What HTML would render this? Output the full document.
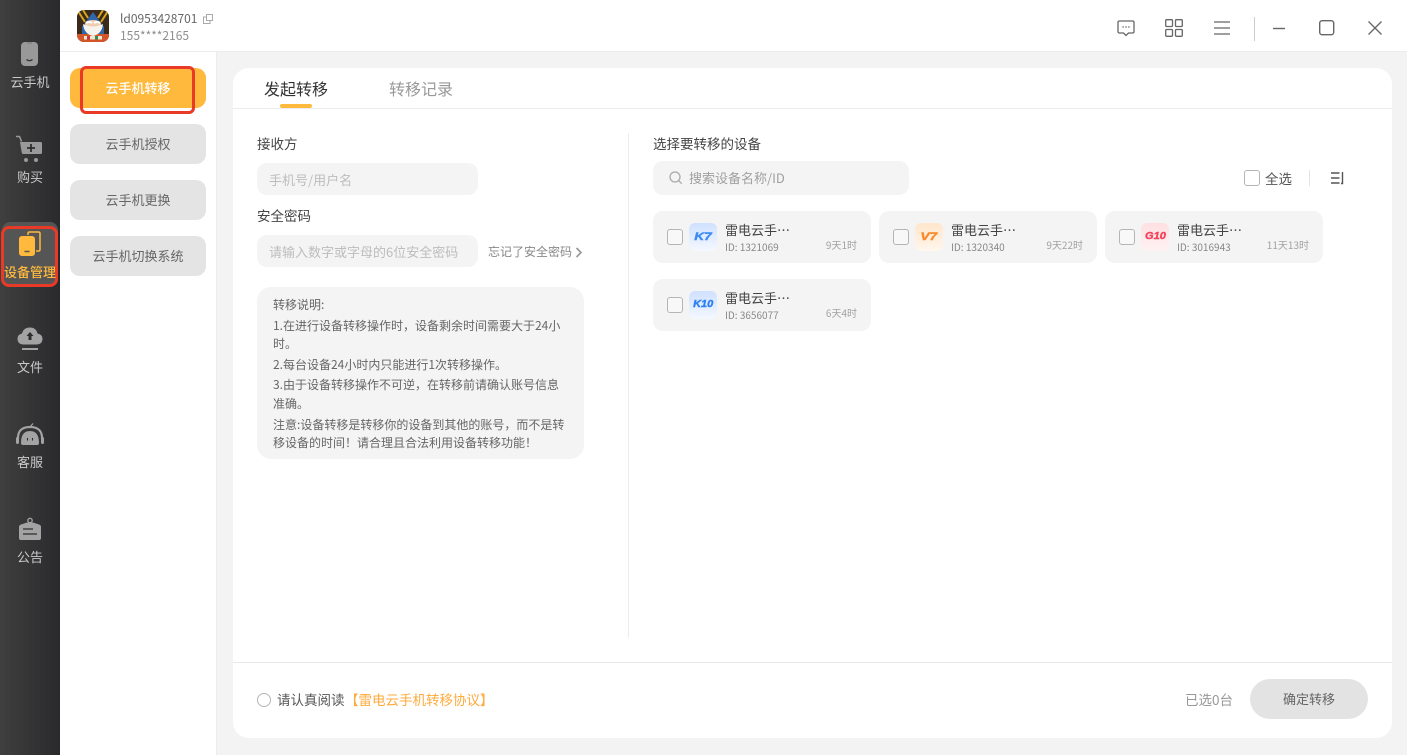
<!DOCTYPE html>
<html lang="zh-CN"><head><meta charset="utf-8"><title>设备管理</title>
<style>
*{box-sizing:border-box;margin:0;padding:0}
html,body{width:1407px;height:755px;overflow:hidden;background:#f3f3f3}
body{position:relative;font-family:"Noto Sans CJK SC","Liberation Sans",sans-serif;color:#333}
.a{position:absolute;white-space:nowrap}
.t{position:absolute;white-space:nowrap;line-height:20px}
svg{position:absolute;display:block}
.rail{left:0;top:0;width:60px;height:755px;background:linear-gradient(90deg,#3f3f3f,#2a2a2d)}
.nl{left:0;width:60px;text-align:center;font-size:13px;color:#c9c9c9}
.side{left:60px;top:52px;width:157px;height:703px;background:#fff;border-right:1px solid #ececec}
.top{left:60px;top:0;width:1347px;height:52px;background:#fff;border-bottom:1px solid #ececec}
.btn{left:70px;width:136px;height:40px;border-radius:10px;background:#e4e4e4;color:#666;font-size:13px;text-align:center;line-height:40px}
.main{left:233px;top:68px;width:1159px;height:670px;background:#fff;border-radius:16px}
.inp{background:#f4f4f4;border-radius:10px;font-size:13px;color:#bdbdbd;line-height:34px;height:32px;width:221px;left:257px;padding-left:12px}
.card{width:218px;height:52px;background:#f4f4f4;border-radius:10px}
.cb{position:absolute;left:14px;top:18px;width:16px;height:16px;border:1.5px solid #b5b5b5;border-radius:3px;background:#f8f8f8}
.ic{position:absolute;left:36px;top:12px;width:28px;height:28px;border-radius:6px;font:italic bold 11px/28px "Liberation Sans",sans-serif;text-align:center;-webkit-text-stroke:.4px currentColor}
.ic span{display:inline-block;transform:scaleX(1.25)}
.ic.w span{transform:scaleX(1.1)}
.n{position:absolute;left:72px;top:10px;font-size:13px;line-height:18px;color:#444;white-space:nowrap}
.id{position:absolute;left:72px;top:28px;font-size:10px;line-height:16px;color:#888;white-space:nowrap}
.d{position:absolute;right:14px;top:26px;font-size:10px;line-height:16px;color:#a2a2a2;white-space:nowrap}
.note{left:257px;top:287px;width:327px;height:172px;background:#f4f4f4;border-radius:14px}
.note div{position:absolute;left:16px;font-size:12px;line-height:18px;color:#666;white-space:nowrap}
</style></head><body>

<div class="a rail"></div>
<div class="a" style="left:2px;top:222px;width:56px;height:64px;background:#555;border-radius:8px"></div>
<div class="a" style="left:1px;top:226px;width:57px;height:61px;border:3px solid #e83a26;border-radius:8px"></div>

<svg style="left:21px;top:42px" width="18" height="24" viewBox="0 0 18 24"><rect width="17" height="24" rx="4" fill="#999"/><path d="M5.500 17.500q3 2.500 6 0" stroke="#333" stroke-width="1.300" fill="none"/><path d="M6 1h5" stroke="#777" stroke-width="1"/></svg>
<div class="t nl" style="top:72px">云手机</div>

<svg style="left:15px;top:135px" width="30" height="28" viewBox="0 0 30 28"><path d="M1 1.500h3.500l2 5" stroke="#999" stroke-width="1.500" fill="none"/><path d="M5 7h20.500q1.500 0 1.500 1.500v9q0 1.500-1.500 1.500h-17q-1.500 0-1.800-1.500z" fill="#999"/><circle cx="11" cy="25" r="2" fill="#999"/><circle cx="21" cy="25" r="2" fill="#999"/><path d="M12 13h8M16 9v8" stroke="#2d2d2f" stroke-width="1.800"/></svg>
<div class="t nl" style="top:167px">购买</div>

<svg style="left:18px;top:231px" width="24" height="26" viewBox="0 0 24 26"><path d="M10 4V2.500q0-1.500 1.500-1.500h9q1.500 0 1.500 1.500v16q0 1.500-1.500 1.500H18" stroke="#ffb93d" stroke-width="1.500" fill="none"/><rect x="1" y="5" width="16" height="20" rx="3" fill="#ffb93d"/><path d="M6.500 20.500h5" stroke="#555" stroke-width="1.500"/></svg>
<div class="t nl" style="top:262px;color:#ffb93d;font-weight:500">设备管理</div>

<svg style="left:17px;top:326px" width="26" height="25" viewBox="0 0 26 25"><path d="M6 18.500q-5.500-.5-5.500-5.500 0-4.500 4.500-5.500 1.500-6 8-6 6 0 7.500 6 5 1 5 5.500 0 5-5.500 5.500z" fill="#a3a3a3"/><path d="M13 6l3.500 4h-2v4h-3v-4h-2z" fill="#2d2d2f"/><path d="M5 23h16" stroke="#a3a3a3" stroke-width="2"/></svg>
<div class="t nl" style="top:357px">文件</div>

<svg style="left:15px;top:422px" width="30" height="26" viewBox="0 0 30 26"><path d="M3 17Q2.500 5 15 5q12.500 0 12 12" stroke="#a3a3a3" stroke-width="2.200" fill="none"/><path d="M15 5l3-3.500" stroke="#a3a3a3" stroke-width="1.300"/><path d="M6 21q0-12 9-12t9 12q0 2-2 2H8q-2 0-2-2z" fill="#a3a3a3"/><path d="M12.500 16v2.500M17.500 16v2.500" stroke="#2d2d2f" stroke-width="1.100"/><rect x="1" y="15" width="3" height="7" rx="1.500" fill="#a3a3a3"/><rect x="26" y="15" width="3" height="7" rx="1.500" fill="#a3a3a3"/></svg>
<div class="t nl" style="top:452px">客服</div>

<svg style="left:18px;top:517px" width="24" height="24" viewBox="0 0 24 24"><circle cx="12" cy="3.500" r="2.200" fill="none" stroke="#a3a3a3" stroke-width="1.300"/><path d="M9 5.500L3 7.500Q1 8 1 10v11q0 2 2 2h18q2 0 2-2V10q0-2-2-2.500l-6-2z" fill="#a3a3a3"/><path d="M5 12h10M5 17h14" stroke="#2d2d2f" stroke-width="1.300"/></svg>
<div class="t nl" style="top:547px">公告</div>

<div class="a top"></div>
<svg style="left:77px;top:10px" width="32" height="32" viewBox="0 0 32 32">
<defs><clipPath id="c"><rect width="32" height="32" rx="7"/></clipPath></defs>
<g clip-path="url(#c)"><rect width="32" height="32" fill="#3a2a1c"/><path d="M1 1l7 11M31 1l-7 11M6 0l5 8M26 0l-5 8" stroke="#d9a41e" stroke-width="2"/><path d="M16 2L5 17v8h22v-8z" fill="#2f66ad"/><rect x="0" y="24" width="32" height="8" fill="#d2562a"/><ellipse cx="16" cy="14" rx="8" ry="4" fill="#f0cdb0"/><path d="M6 14q10 5 20 0-1 10-10 12-9-2-10-12z" fill="#f6f2ec"/><path d="M9 13q3-2 6 0M17 13q3-2 6 0" stroke="#fff" stroke-width="2" fill="none"/><rect x="7" y="26" width="18" height="3.500" fill="#ece6d6"/><rect x="10" y="26" width="3" height="3.500" fill="#c33"/><rect x="18" y="26" width="3" height="3.500" fill="#3a8a4a"/></g></svg>
<div class="t" style="left:120px;top:9px;font-size:12px;color:#666">ld0953428701</div>
<svg style="left:203px;top:14px" width="10" height="10" viewBox="0 0 10 10" fill="none" stroke="#aaa"><rect x="3.500" y=".5" width="6" height="6"/><path d="M3 3H.5v6.500H7V7"/></svg>
<div class="t" style="left:120px;top:26px;font-size:12px;color:#8e8e8e">155****2165</div>

<svg style="left:1117px;top:20px" width="18" height="17" viewBox="0 0 18 17" fill="none" stroke="#666" stroke-width="1.300"><path d="M2.500 1h13q1.500 0 1.500 1.500v9q0 1.500-1.500 1.500H11.500L9 15.500 6.500 13h-4Q1 13 1 11.500v-9Q1 1 2.500 1z"/><path d="M5.500 7h1.200M8.400 7h1.200M11.300 7h1.200" stroke-width="1.500"/></svg>
<svg style="left:1165px;top:19px" width="18" height="18" viewBox="0 0 18 18" fill="none" stroke="#666" stroke-width="1.300"><rect x=".7" y=".7" width="6.800" height="6.800" rx="1"/><rect x="10.500" y=".7" width="6.800" height="6.800" rx="1"/><rect x=".7" y="10.500" width="6.800" height="6.800" rx="1"/><rect x="10.500" y="10.500" width="6.800" height="6.800" rx="1"/></svg>
<svg style="left:1214px;top:21px" width="16" height="14" viewBox="0 0 16 14" stroke="#666" stroke-width="1.300"><path d="M0 1h16M0 7h16M0 13h16"/></svg>
<div class="a" style="left:1254px;top:17px;width:1px;height:24px;background:#ccc"></div>
<svg style="left:1273px;top:27px" width="12" height="3" viewBox="0 0 12 3" stroke="#666" stroke-width="1.400"><path d="M0 1.500h12"/></svg>
<svg style="left:1319px;top:20px" width="16" height="16" viewBox="0 0 16 16" fill="none" stroke="#666" stroke-width="1.400"><rect x=".7" y=".7" width="14" height="14" rx="2.500"/></svg>
<svg style="left:1368px;top:21px" width="14" height="14" viewBox="0 0 14 14" stroke="#666" stroke-width="1.300"><path d="M.5.500l13 13M13.500.500l-13 13"/></svg>

<div class="a side"></div>
<div class="a btn" style="top:68px;background:#ffb93d;color:#fff;font-weight:500">云手机转移</div>
<div class="a" style="left:80px;top:66px;width:115px;height:48px;border:3px solid #e83a26;border-radius:6px"></div>
<div class="a btn" style="top:124px">云手机授权</div>
<div class="a btn" style="top:180px">云手机更换</div>
<div class="a btn" style="top:236px">云手机切换系统</div>

<div class="a main"></div>
<div class="t" style="left:264px;top:78px;font-size:16px;color:#333">发起转移</div>
<div class="t" style="left:389px;top:78px;font-size:16px;color:#999">转移记录</div>
<div class="a" style="left:280px;top:104px;width:32px;height:4px;border-radius:2px;background:#ffb93d"></div>
<div class="a" style="left:233px;top:108px;width:1159px;height:1px;background:#ececec"></div>

<div class="t" style="left:257px;top:133px;font-size:13.500px;color:#444">接收方</div>
<div class="a inp" style="top:163px">手机号/用户名</div>
<div class="t" style="left:257px;top:205px;font-size:13.500px;color:#444">安全密码</div>
<div class="a inp" style="top:235px">请输入数字或字母的6位安全密码</div>
<div class="t" style="left:488px;top:242px;font-size:12px;color:#888">忘记了安全密码</div>
<svg style="left:575px;top:247px" width="8" height="11" viewBox="0 0 8 11" fill="none" stroke="#999" stroke-width="1.700"><path d="M1.500 1l4.500 4.500L1.500 10"/></svg>

<div class="a note">
<div style="top:9px">转移说明:</div>
<div style="top:30px">1.在进行设备转移操作时，设备剩余时间需要大于24小</div>
<div style="top:48px">时。</div>
<div style="top:69px">2.每台设备24小时内只能进行1次转移操作。</div>
<div style="top:89px">3.由于设备转移操作不可逆，在转移前请确认账号信息</div>
<div style="top:108px">准确。</div>
<div style="top:129px">注意:设备转移是转移你的设备到其他的账号，而不是转</div>
<div style="top:147px">移设备的时间！请合理且合法利用设备转移功能！</div>
</div>

<div class="a" style="left:628px;top:133px;width:1px;height:505px;background:#ececec"></div>
<div class="t" style="left:653px;top:133px;font-size:13.500px;color:#444">选择要转移的设备</div>
<div class="a" style="left:653px;top:161px;width:256px;height:34px;border-radius:10px;background:#f4f4f4"></div>
<svg style="left:669px;top:171px" width="14" height="14" viewBox="0 0 14 14" fill="none" stroke="#aaa" stroke-width="1.300"><circle cx="6" cy="6" r="5"/><path d="M9.700 9.700l3 3"/></svg>
<div class="t" style="left:689px;top:168px;font-size:13px;color:#a0a0a0">搜索设备名称/ID</div>

<div class="a" style="left:1244px;top:170px;width:16px;height:16px;border:1.500px solid #b5b5b5;border-radius:3px;background:#fff"></div>
<div class="t" style="left:1265px;top:168px;font-size:13.500px;color:#555">全选</div>
<div class="a" style="left:1309px;top:170px;width:1px;height:16px;background:#e4e4e4"></div>
<svg style="left:1331px;top:172px" width="14" height="13" viewBox="0 0 14 13" stroke="#555" stroke-width="1.400" fill="none"><path d="M0 1h8.500M0 6h8.500M0 11h8.500"/><path d="M11.500 0v11.500H10"/></svg>

<div class="a card" style="left:653px;top:211px"><div class="cb"></div><div class="ic" style="background:linear-gradient(#cfe0ff,#f4f8ff);color:#3d8bf5"><span>K7</span></div><div class="n">雷电云手…</div><div class="id">ID: 1321069</div><div class="d">9天1时</div></div>
<div class="a card" style="left:879px;top:211px"><div class="cb"></div><div class="ic" style="background:linear-gradient(#ffe6cc,#fff6ec);color:#fa8a2a"><span>V7</span></div><div class="n">雷电云手…</div><div class="id">ID: 1320340</div><div class="d">9天22时</div></div>
<div class="a card" style="left:1105px;top:211px"><div class="cb"></div><div class="ic w" style="background:linear-gradient(#ffdfe2,#fff2f3);color:#f5435c;font-size:10px"><span>G10</span></div><div class="n">雷电云手…</div><div class="id">ID: 3016943</div><div class="d">11天13时</div></div>
<div class="a card" style="left:653px;top:279px"><div class="cb"></div><div class="ic w" style="background:linear-gradient(#cfe0ff,#f4f8ff);color:#2f80f5;font-size:10px"><span>K10</span></div><div class="n">雷电云手…</div><div class="id">ID: 3656077</div><div class="d">6天4时</div></div>

<div class="a" style="left:233px;top:662px;width:1159px;height:1px;background:#e8e8e8"></div>
<div class="a" style="left:257px;top:693px;width:14px;height:14px;border:1px solid #b5b5b5;border-radius:50%"></div>
<div class="t" style="left:277px;top:689px;font-size:13.500px;color:#555">请认真阅读</div>
<div class="t" style="left:345px;top:689px;font-size:13.500px;color:#ffaa3c">【雷电云手机转移协议】</div>
<div class="t" style="left:1185px;top:689px;font-size:13.500px;color:#999">已选0台</div>
<div class="a" style="left:1250px;top:679px;width:118px;height:40px;border-radius:20px;background:#e3e3e3;color:#666;font-size:13px;text-align:center;line-height:40px">确定转移</div>
</body></html>
